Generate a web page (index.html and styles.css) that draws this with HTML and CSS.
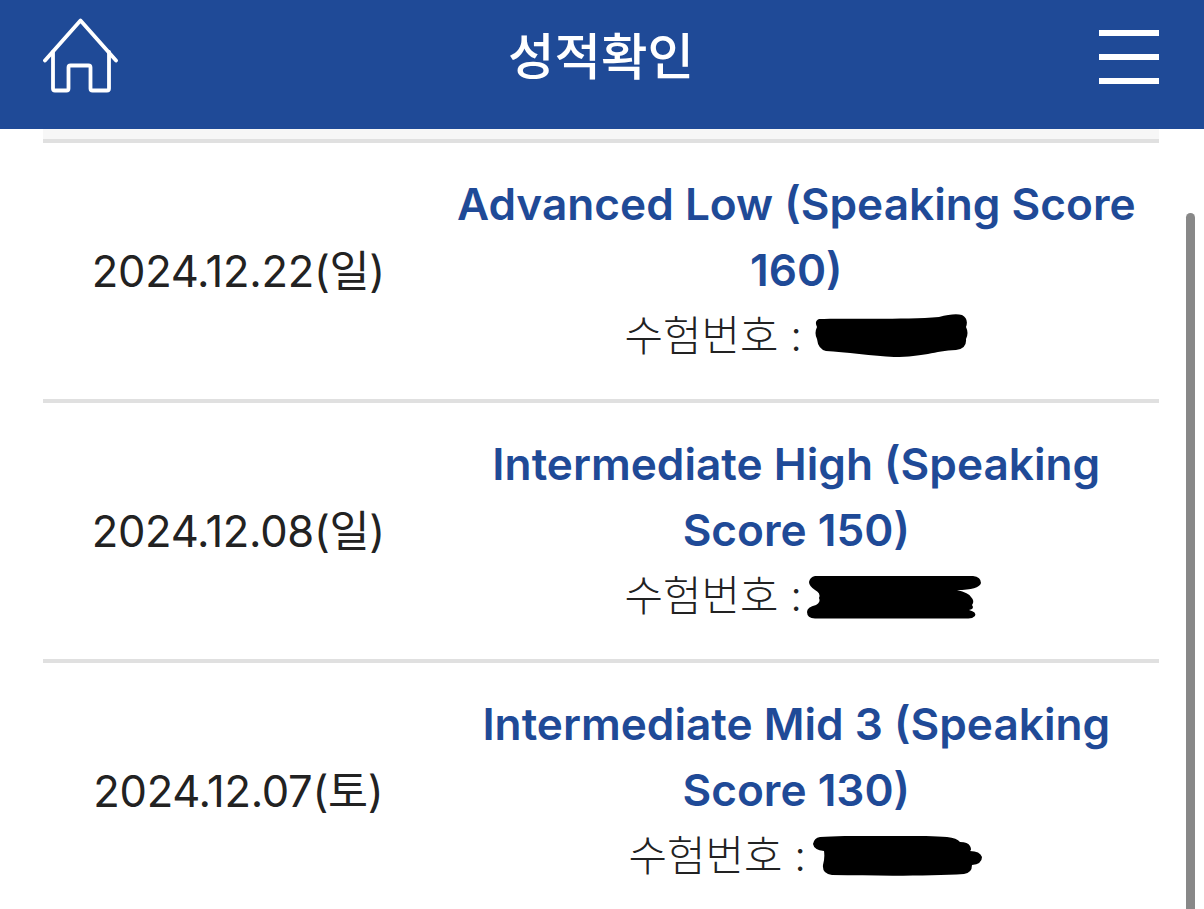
FILE: index.html
```html
<!DOCTYPE html>
<html lang="ko">
<head>
<meta charset="utf-8">
<title>성적확인</title>
<link rel="stylesheet" href="styles.css">
</head>
<body>
<header class="topbar">
  <svg class="home" viewBox="0 0 76 76" width="76" height="76" fill="none" stroke="#fff" stroke-width="3.8" stroke-linecap="round" stroke-linejoin="round">
    <path d="M2 42.500 37.500 2.500 73 42.500"/>
    <path d="M10 34V70.500Q10 72.500 12 72.500H23.500Q25.500 72.500 25.500 70.500V49.500Q25.500 47.500 27.500 47.500H45.500Q47.500 47.500 47.500 49.500V70.500Q47.500 72.500 49.500 72.500H64Q66 72.500 66 70.500V34"/>
  </svg>
  <h1 class="title">성적확인</h1>
  <div class="menu"><span></span><span></span><span></span></div>
</header>
<main class="list">
  <div class="row">
    <div class="date">2024.12.22(일)</div>
    <div class="result">
      <div class="level">Advanced Low (Speaking Score 160)</div>
      <div class="exam">수험번호 :
        <span class="slot">
          <svg class="mask mask-a" width="154" height="45" viewBox="0 0 154 45"><path d="M5 6C30 5 90 7 125 4Q140 0 148 2Q155 6 152 14Q155 20 152 26Q153 36 142 37C120 38 110 44 80 44C60 43 30 39 12 38Q4 36 3 26Q0 20 3 14Q0 8 5 6Z"/></svg>
        </span>
      </div>
    </div>
  </div>
  <div class="row">
    <div class="date">2024.12.08(일)</div>
    <div class="result">
      <div class="level">Intermediate High (Speaking Score 150)</div>
      <div class="exam">수험번호 :
        <span class="slot">
          <svg class="mask mask-b" width="175" height="43" viewBox="0 0 175 43"><path d="M8 0H166Q174 1 174 7Q172 14 150 14Q162 17 164 21Q168 25 165 29Q168 33 162 34Q170 36 168 40Q165 43 160 42.500H8Q0 42 0 36Q0 31 9 29Q14 26 12 22Q14 17 8 14Q2 10 2 6Q3 1 8 0Z"/></svg>
        </span>
      </div>
    </div>
  </div>
  <div class="row">
    <div class="date">2024.12.07(토)</div>
    <div class="result">
      <div class="level">Intermediate Mid 3 (Speaking Score 130)</div>
      <div class="exam">수험번호 :
        <span class="slot slot-short">
          <svg class="mask mask-c" width="170" height="40" viewBox="0 0 170 40"><path d="M8 1C40 -1 110 -1 135 1Q145 2 148 6Q156 6 158 10Q160 14 158 15Q168 15 170 21Q170 28 160 29Q160 37 152 38C120 40 70 40 20 39Q10 38 11 29Q13 22 12 15Q2 14 1 8Q2 2 8 1Z"/></svg>
        </span>
      </div>
    </div>
  </div>
</main>
<div class="scrollbar"></div>
</body>
</html>
```
FILE: styles.css
```css
* { box-sizing: border-box; }
html, body { margin: 0; height: 100%; overflow: hidden; background: #fff; }
body { font-family: Inter, "Noto Sans CJK KR", sans-serif; color: #222; position: relative; }

.topbar {
  height: 129px;
  background: #1f4a97;
  padding: 0 45px 0 43px;
  display: grid;
  grid-template-columns: 1fr auto 1fr;
  align-items: center;
}
.home { display: block; margin-top: -18px; }
.title {
  margin: -22px 0 0;
  color: #fff;
  font-family: "Noto Sans CJK KR", sans-serif;
  font-size: 50.5px;
  font-weight: 500;
  line-height: 1;
}
.menu {
  width: 60px;
  height: 54px;
  margin-top: -16px;
  justify-self: end;
  display: flex;
  flex-direction: column;
  justify-content: space-between;
}
.menu span { display: block; height: 6px; background: #fff; }

.list { margin: 0 45px 0 43px; padding-top: 10px; background: linear-gradient(#f7f7f7 10px, transparent 10px); }
.row {
  height: 260px;
  border-top: 4px solid #e0e0e0;
  display: grid;
  grid-template-columns: 35% 65%;
  align-items: center;
  text-align: center;
}
.date { font-size: 43.500px; letter-spacing: -0.3px; padding-bottom: 6px; }
.result { padding: 0 14px 2px; }
.level {
  color: #1f4a97;
  font-size: 44.200px;
  font-weight: 600;
  line-height: 66px;
}
.exam {
  font-size: 41.800px;
  font-weight: 300;
  line-height: 66px;
  display: flex;
  justify-content: center;
  align-items: center;
  gap: 12px;
}
.slot { position: relative; display: block; width: 154px; height: 44px; }
.slot-short { width: 146px; }
.mask { position: absolute; display: block; fill: #000; }
.mask-a { left: 0; top: -1px; }
.mask-b { left: -7px; top: 2px; }
.mask-c { left: -6px; top: 2px; }
.scrollbar {
  position: absolute;
  left: 1186px;
  top: 213px;
  bottom: 0;
  width: 9px;
  background: #888;
  border-radius: 5px 5px 0 0;
}
```
